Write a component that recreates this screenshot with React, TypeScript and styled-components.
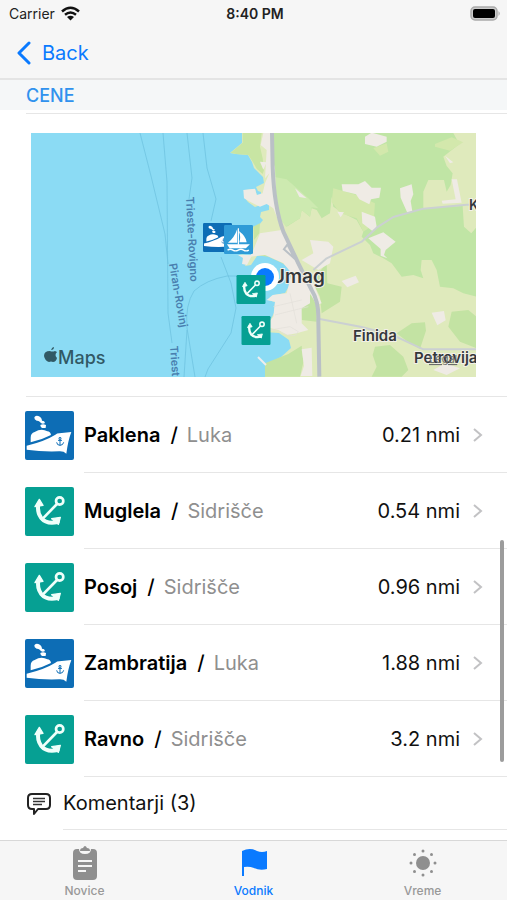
import React from "react";
import styled, { createGlobalStyle } from "styled-components";

const Global = createGlobalStyle`
  *, *::before, *::after { box-sizing: border-box; }
  body { margin: 0; background: #fff; color: #111; font-family: Inter, "Liberation Sans", sans-serif; }
  button, a { font: inherit; color: inherit; }
`;

const BLUE = "#0a7aff";

const Screen = styled.div`
  height: 100vh;
  display: flex;
  flex-direction: column;
  overflow: hidden;
`;
const TopArea = styled.header`
  background: #f6f6f6;
  border-bottom: 2px solid #e4e4e4;
`;
const StatusBar = styled.div`
  display: grid;
  grid-template-columns: 1fr auto 1fr;
  align-items: center;
  height: 27px;
  padding: 0 6px 0 9px;
  font-size: 14px;
  color: #222;
`;
const Carrier = styled.span`
  display: flex;
  align-items: center;
  gap: 6px;
`;
const Clock = styled.time`
  font-weight: 600;
`;
const BatteryIcon = styled.svg`
  justify-self: end;
`;
const NavBar = styled.nav`
  display: flex;
  height: 51px;
  padding: 0 16px;
`;
const BackButton = styled.button`
  display: flex;
  align-items: center;
  gap: 10px;
  padding: 0;
  border: 0;
  background: none;
  font-size: 20px;
  color: ${BLUE};
`;
const Content = styled.main`
  position: relative;
  flex: 1;
  min-height: 0;
  overflow: hidden;
`;
const SectionTitle = styled.h2`
  margin: 0;
  height: 30px;
  padding-left: 26px;
  background: #f5f7f8;
  font-size: 18px;
  line-height: 32px;
  font-weight: 500;
  color: #3092ee;
`;
const MapBlock = styled.section`
  margin: 3px 0 0 26px;
  padding: 19px 31px 19px 5px;
  border-top: 1px solid #e6e6e6;
  border-bottom: 1px solid #e6e6e6;
`;
const MapView = styled.svg`
  display: block;
  width: 100%;
  height: auto;
`;
const List = styled.ul`
  margin: 0;
  padding: 0;
  list-style: none;
`;
const PlaceLink = styled.a`
  display: flex;
  align-items: center;
  gap: 10px;
  height: 76px;
  padding-left: 25px;
  text-decoration: none;
`;
const PlaceBody = styled.span`
  display: flex;
  flex: 1;
  align-items: center;
  align-self: stretch;
  padding-right: 24px;
  border-bottom: 1px solid #e6e6e6;
  font-size: 20px;
`;
const PlaceName = styled.span`
  flex: 1;
  font-weight: 600;
  color: #000;
`;
const Slash = styled.span`
  margin: 0 9px 0 10px;
  font-weight: 500;
`;
const Kind = styled.span`
  font-weight: 400;
  color: #8f8f8f;
`;
const Distance = styled.span`
  margin-right: 12px;
`;
const CommentsLink = styled.a`
  display: flex;
  align-items: center;
  gap: 12px;
  height: 53px;
  padding-left: 27px;
  font-size: 20px;
  text-decoration: none;
`;
const CommentsLabel = styled.span`
  flex: 1;
  align-self: stretch;
  line-height: 53px;
  border-bottom: 1px solid #e6e6e6;
`;
const ScrollThumb = styled.div`
  position: absolute;
  top: 460px;
  right: 3px;
  width: 4px;
  height: 222px;
  border-radius: 2px;
  background: #9c9c9c;
`;
const TabBar = styled.nav`
  display: grid;
  grid-template-columns: repeat(3, 1fr);
  height: 60px;
  border-top: 1px solid #d8d8d8;
  background: #f6f6f6;
`;
const Tab = styled.a<{ $active?: boolean }>`
  display: flex;
  flex-direction: column;
  align-items: center;
  gap: 2px;
  padding-top: 4px;
  font-size: 12px;
  line-height: 16px;
  font-weight: 500;
  text-decoration: none;
  color: ${(p) => (p.$active ? BLUE : "#999")};
`;

function ShipGlyph() {
  return (
    <>
      <rect width="147" height="147" rx="6" fill="#0d6db5" />
      <g fill="#fff">
        <path d="M28 19q3-7 12-4 10 4 11 14 8 0 9 7-7 5-13-1-5-7-12-6-8-3-7-10Z" />
        <path d="M46 42q8-5 17 0l-1 9H51q-5-3-5-9Z" />
        <path d="M17 94V80q0-14 12-17 20-12 38-2 9 0 11 11-29 15-61 22Z" />
        <path d="M5 104q54-13 86-33 5-4 12-4l36-4q-10 26-15 65-8-8-22-7-50 2-97-5Z" />
      </g>
      <g fill="none" stroke="#0d6db5" strokeWidth="3">
        <path d="M105 84v19M99 88h12M95 94q1 9 10 9t11-9" />
        <circle cx="105" cy="82" r="3" />
      </g>
    </>
  );
}
function AnchorGlyph() {
  return (
    <>
      <rect width="147" height="147" rx="6" fill="#06a093" />
      <g fill="none" stroke="#effffa" strokeLinecap="round">
        <circle cx="104" cy="42" r="11" strokeWidth="8" />
        <path d="m96 51-45 46" strokeWidth="8" />
        <path d="M40 53q-4 22 8 39 17 21 50 13" strokeWidth="12" />
      </g>
      <path d="m43 37-13 22 24-4Zm63 54-26 4 20 17Z" fill="#effffa" stroke="#effffa" strokeWidth="4" strokeLinejoin="round" />
    </>
  );
}
function SailGlyph() {
  return (
    <>
      <rect width="147" height="147" rx="6" fill="#2f9bd7" />
      <g fill="#fff">
        <path d="M67 20v70H20q34-28 47-70ZM75 31q35 25 40 57H78q9-28-3-57ZM15 98h116l-20 20H28Z" />
        <path d="M70 16h6v84h-6Z" />
      </g>
      <path d="M18 127q14-8 27 0t27 0 27 0 27 0" fill="none" stroke="#fff" strokeWidth="7" />
    </>
  );
}

type PlaceType = "ship" | "anchor";
const Tile = ({ type }: { type: PlaceType }) => (
  <svg width="49" height="49" viewBox="0 0 147 147" aria-hidden="true">
    {type === "ship" ? <ShipGlyph /> : <AnchorGlyph />}
  </svg>
);

const LAND =
  "M211 0V10L199 20 205 21 217 22 221 29 223 35 227 39 232 44 233 50 225 54 227 58 230 59V63L226 62 224 56 214 57 213 64 217 69 224 74 232 71 238 71V77L230 79 229 84 232 87 228 92 222 94V123L208 121 218 124 214 133 220 132 226 123 234 122 246 126 259 136 260 150 254 160 243 162 237 167 244 169 243 180 236 194 233 199 248 200 258 207 260 215 250 224 238 230 234 244H445V0Z";

const MapPicture = () => (
  <MapView viewBox="0 0 445 244" role="img" aria-label="Zemljevid okolice Umaga">
    <rect width="445" height="244" fill="#8bdbf4" />
    <g fill="none" stroke="#6dc2df" strokeWidth="1" opacity=".75">
      <path d="M109 0 120 43 134 101 137 131M132 0 136 49 137 180 141 210M156 0 161 45 158 66M172 0 176 35 185 66 180 88M190 124 200 150 205 175 200 200 177 236 174 244M214 143H196Q175 147 163 158 154 172 156 195L164 244M156 197 153 244" />
    </g>
    <path d={LAND} fill="#dfeabc" />
    {/* woods, fields and built-up areas, on a grid three times finer */}
    <g transform="translate(219 -3) scale(.3333)">
      <path d="M-22 9V38L-58 68-42 72-5 75 8 95 20 116 38 132 42 120 38 85 30 50 35 9ZM10 290 30 280 28 310 12 330ZM10 375l45 5 60 28 15 15-5-30-60-25-45-8Z" fill="#c8e5a3" />
      <path d="M66 9H610L628 42 580 80 590 108 608 130 602 165 590 185 582 150 535 150 520 185 520 235 638 228 642 290 664 310 681 290V500L640 490 610 475 570 470 560 420 545 390 515 390 512 420 520 445 490 435 455 440 425 400 400 385 370 370 360 345 335 320 340 305 320 270 280 250 250 230 245 200 240 250 215 265 200 240 185 235 180 260 155 240 150 265 110 290 90 260 75 200Z" fill="#c0e5a5" />
      <path d="M70 140 110 148 175 205 205 235 185 232 180 260 155 240 150 265 108 290 85 260 75 200Z" fill="#cdeab0" />
      <path d="m250 175 70 20 55 25-5 65-30 20-20-40-50-15-25-35ZM370 55l40-15 5 25-25 12ZM555 42l50-20 35 15-40 25-45-12Z" fill="#d3e8ac" />
      <path d="M230 400 232 460 275 470 270 515 215 550 210 500 195 470 205 430ZM185 490l15 15v70l-45-5-3-40ZM440 610l45-30 40-3 3 25-18 55-35-20ZM375 650l45-5 40 35 15 40-20 20h-90l15-30-12-35ZM605 545l50-5 25 20v95l-50-20-35-45ZM45 700l70-28 40-25 5 50-10 43H45Z" fill="#c3e3a3" />
      <path d="M40 9 66 9 68 90 75 115 78 200 85 255 115 330 150 410 190 460 215 520 200 525 180 490 180 520 155 535 155 580 175 600 140 610 112 615 85 600 45 590 70 560 75 515 50 510 68 495 110 490 125 430 100 400 45 375 0 380 10 360 30 310 95 300 88 280 70 235 50 222 30 230 0 215 -18 205 -20 180 15 176 20 195 38 190 45 160 58 130 45 145 50 60 32 45Z" fill="#efebe5" />
      <path d="M180 330l55 5 15 15-10 50-35 20-50-30 35-20Z" fill="#efebe5" />
      <path d="m345 20 20-12 45 12 0 15-30 15-35-8ZM275 163h50l20-10 20 20 28 0-5 30-25 5-5 15-30-15-10-15-40-10ZM135 175l35 30-22-4ZM450 175l35-12 5 30-8 20 5 30-15 5-20-45ZM335 245l40 15 5 30-10 15-33-25ZM355 325l45-18 37 28-30 25-5 15 10 10-20-8 0-20ZM275 453l42-16 10 20-35 15ZM545 548l37-5 5 28-25 15ZM155 658l30-5 2 85h-35l10-30ZM585 77l25 20-10 3ZM605 148l16 0 14 70-57 3-3-9 42-4ZM550 720l35-20 45 15-40 20ZM262 245l20 2-10 15ZM30 95l20 2-10 22Z" fill="#efebe5" />
      <path d="m60 600 60-10 25 15-10 12-23-2-30-12ZM70 530l85-20M75 555l100-25M120 490l20 90" fill="none" stroke="#e2dfda" strokeWidth="2" />
      <g fill="none" stroke="#cbd0d2" strokeWidth="6" strokeLinejoin="round">
        <path d="m190 420 40-35 105-50 45-42 50-32 90-25 130-12h30M205 566l130 25 95 25 90 42h160" />
        <path d="M66 9 68 110Q72 230 100 305L145 400 185 480Q207 515 205 570L208 740" strokeWidth="12" stroke="#bac0c6" />
        <path d="m100 360 12-16 22 42-32-28" stroke="#bac0c6" />
      </g>
    </g>
    <path d="M207 122h14l-5 10-5-1 1-6Z" fill="#efebe5" />
    <path d="m227 224 8 8" stroke="#eee" strokeWidth="2" />
    <g fill="#497faf" fontFamily="Inter, sans-serif" fontSize="11" fontWeight="600">
      <text transform="translate(155 64) rotate(87)">Trieste-Rovigno</text>
      <text transform="translate(138 131) rotate(80)">Piran-Rovinj</text>
      <text transform="translate(139 213) rotate(86)">Triest</text>
    </g>
    <g fill="#35383b" stroke="#f2f0e8" strokeWidth="2" paintOrder="stroke" fontFamily="Inter, sans-serif" fontWeight="600">
      <text x="240" y="150" fontSize="19">Umag</text>
      <text x="322" y="208" fontSize="15">Finida</text>
      <text x="383" y="230" fontSize="15">Petrovija</text>
      <text x="438" y="77" fontSize="14">K</text>
    </g>
    <text x="398" y="230" fontSize="11" fontFamily="Inter, sans-serif" fill="#6b6b6b" textDecoration="underline">Legal</text>
    <circle cx="234" cy="144" r="14" fill="#fff" />
    <circle cx="234" cy="144" r="9" fill={BLUE} />
    <svg x="172" y="90" width="29" height="29" viewBox="0 0 147 147"><ShipGlyph /></svg>
    <svg x="193" y="92" width="29" height="29" viewBox="0 0 147 147"><SailGlyph /></svg>
    <svg x="205" y="142" width="30" height="29" viewBox="0 0 147 147"><AnchorGlyph /></svg>
    <svg x="210" y="183" width="30" height="29" viewBox="0 0 147 147"><AnchorGlyph /></svg>
    <path d="M20 217q1-3 3-3 0 3-3 3Zm-1 1q2 1 5 0l2 1q-3 3 0 6-1 4-4 4-2-1-4 0-4-1-5-6 0-5 6-5Z" fill="#315965" />
    <text x="27" y="231" fontSize="18" fontWeight="500" fontFamily="Inter, sans-serif" fill="#315965">Maps</text>
  </MapView>
);

const places: { name: string; kind: string; distance: string; type: PlaceType }[] = [
  { name: "Paklena", kind: "Luka", distance: "0.21 nmi", type: "ship" },
  { name: "Muglela", kind: "Sidrišče", distance: "0.54 nmi", type: "anchor" },
  { name: "Posoj", kind: "Sidrišče", distance: "0.96 nmi", type: "anchor" },
  { name: "Zambratija", kind: "Luka", distance: "1.88 nmi", type: "ship" },
  { name: "Ravno", kind: "Sidrišče", distance: "3.2 nmi", type: "anchor" },
];

export default function App() {
  return (
    <Screen>
      <Global />
      <TopArea>
        <StatusBar>
          <Carrier>
            Carrier
            <svg width="19" height="15" viewBox="0 0 19 15" aria-hidden="true">
              <g fill="none" stroke="#111" strokeWidth="2.5">
                <path d="M1 5.5q8.500-7.500 17 0M4 8.800q5.500-4.500 11 0" />
              </g>
              <path d="M6 11q3.500-2.500 7 0l-3.500 3.500Z" fill="#111" />
            </svg>
          </Carrier>
          <Clock>8:40 PM</Clock>
          <BatteryIcon width="31" height="15" viewBox="0 0 31 15" aria-hidden="true">
            <rect x="1" y="1" width="26" height="13" rx="4" fill="#ccc" stroke="#aaa" strokeWidth="1.500" />
            <rect x="3" y="3" width="22" height="9" rx="2" fill="#000" />
            <path d="M28.500 5q2.500 2.500 0 5Z" fill="#aaa" />
          </BatteryIcon>
        </StatusBar>
        <NavBar>
          <BackButton type="button">
            <svg width="16" height="24" viewBox="0 0 16 24" aria-hidden="true">
              <path d="M13 2 3 12l10 10" fill="none" stroke={BLUE} strokeWidth="3" strokeLinecap="round" strokeLinejoin="round" />
            </svg>
            Back
          </BackButton>
        </NavBar>
      </TopArea>
      <Content>
        <SectionTitle>CENE</SectionTitle>
        <MapBlock>
          <MapPicture />
        </MapBlock>
        <List>
          {places.map((p) => (
            <li key={p.name}>
              <PlaceLink href="#">
                <Tile type={p.type} />
                <PlaceBody>
                  <PlaceName>
                    {p.name}
                    <Slash>/</Slash>
                    <Kind>{p.kind}</Kind>
                  </PlaceName>
                  <Distance>{p.distance}</Distance>
                  <svg width="11" height="16" viewBox="0 0 11 16" aria-hidden="true">
                    <path d="m2 2 7 6-7 6" fill="none" stroke="#c2c2c4" strokeWidth="2" />
                  </svg>
                </PlaceBody>
              </PlaceLink>
            </li>
          ))}
        </List>
        <CommentsLink href="#">
          <svg width="24" height="24" viewBox="0 0 24 24" aria-hidden="true">
            <path d="M5 2h14q4 0 4 4v7q0 4-4 4h-8l-4 5v-5H5q-4 0-4-4V6q0-4 4-4Z" fill="none" stroke="#222" strokeWidth="2" strokeLinejoin="round" />
            <path d="M6 6.500h12M6 9.500h12M6 12.500h9" stroke="#333" strokeWidth="1.300" />
          </svg>
          <CommentsLabel>Komentarji (3)</CommentsLabel>
        </CommentsLink>
        <ScrollThumb />
      </Content>
      <TabBar>
        <Tab href="#">
          <svg width="36" height="36" viewBox="0 0 36 36" aria-hidden="true">
            <path d="M10 4h2q0 5 6 5t6-5h2q4 0 4 4v23q0 4-4 4H10q-4 0-4-4V8q0-4 4-4Z" fill="#8f8f8f" />
            <path d="M13 6q0-3 3-3 2-4 4 0 3 0 3 3Z" fill="#8f8f8f" />
            <path d="M11 16h14M11 21h14M11 26h8" stroke="#f6f6f6" strokeWidth="2" />
          </svg>
          Novice
        </Tab>
        <Tab href="#" $active aria-current="page">
          <svg width="36" height="36" viewBox="0 0 36 36" aria-hidden="true">
            <path d="M6 6q8-4 15 0 5 2 10 0v18q-7 2-13-1-5-2-10-1v9H6Z" fill={BLUE} />
          </svg>
          Vodnik
        </Tab>
        <Tab href="#">
          <svg width="36" height="36" viewBox="0 0 36 36" aria-hidden="true">
            <g fill="#8f8f8f">
              <circle cx="18" cy="18" r="7" />
              <circle cx="18" cy="6" r="1.500" /><circle cx="18" cy="30" r="1.500" />
              <circle cx="6" cy="18" r="1.500" /><circle cx="30" cy="18" r="1.500" />
              <circle cx="9.500" cy="9.500" r="1.500" /><circle cx="26.500" cy="9.500" r="1.500" />
              <circle cx="9.500" cy="26.500" r="1.500" /><circle cx="26.500" cy="26.500" r="1.500" />
            </g>
          </svg>
          Vreme
        </Tab>
      </TabBar>
    </Screen>
  );
}
